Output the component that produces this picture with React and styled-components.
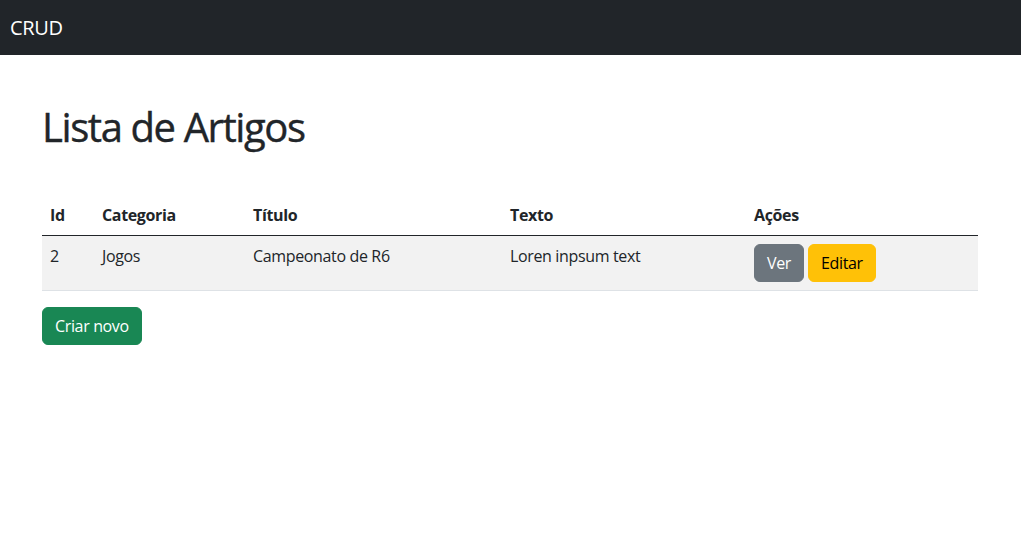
import React from "react"
import styled, { createGlobalStyle } from "styled-components"

const GlobalStyle = createGlobalStyle`
    *, *::before, *::after {
        box-sizing: border-box;
    }
    body {
        margin: 0;
        font-family: "Open Sans", "Noto Sans", sans-serif;
        font-size: 16px;
        line-height: 1.5;
        letter-spacing: -0.022em;
        color: #212529;
        background: #fff;
    }
`

const Navbar = styled.nav`
    height: 55px;
    background: #212529;
    display: flex;
    align-items: center;
    padding-left: 10px;
`

const Brand = styled.span`
    color: #fff;
    font-size: 20px;
    line-height: 30px;
`

const Container = styled.main`
    width: 936px;
    margin: 0 0 0 42px;
    padding-top: 48px;
`

const Title = styled.h1`
    margin: 0 0 44px;
    font-size: 40px;
    font-weight: 500;
    line-height: 1.2;
    letter-spacing: -0.035em;
    -webkit-text-stroke: 0.4px #212529;
`

const Table = styled.table`
    width: 100%;
    border-collapse: collapse;
    table-layout: fixed;
    margin-bottom: 16px;
`

const HeadCell = styled.th`
    text-align: left;
    font-weight: 700;
    padding: 8px;
    width: ${p => p.$w}px;
    border-bottom: 1px solid #212529;
`

const Row = styled.tr`
    background: #f2f2f2;
    border-bottom: 1px solid #dee2e6;
`

const Cell = styled.td`
    padding: 8px;
    vertical-align: top;
`

const Actions = styled.div`
    display: flex;
    gap: 4px;
`

const colors = {
    secondary: ["#6c757d", "#fff"],
    warning: ["#ffc107", "#000"],
    success: ["#198754", "#fff"],
}

const Button = styled.button`
    font: inherit;
    letter-spacing: inherit;
    line-height: 24px;
    padding: 6px 12px;
    border: 1px solid ${p => colors[p.$variant][0]};
    border-radius: 6px;
    background: ${p => colors[p.$variant][0]};
    color: ${p => colors[p.$variant][1]};
    cursor: pointer;
`

const artigos = [
    { id: 2, categoria: "Jogos", titulo: "Campeonato de R6", texto: "Loren inpsum text" },
]

const App = () => (
    <>
        <GlobalStyle />
        <Navbar>
            <Brand>CRUD</Brand>
        </Navbar>
        <Container>
            <Title>Lista de Artigos</Title>
            <Table>
                <thead>
                    <tr>
                        <HeadCell $w={52}>Id</HeadCell>
                        <HeadCell $w={151}>Categoria</HeadCell>
                        <HeadCell $w={257}>Título</HeadCell>
                        <HeadCell $w={244}>Texto</HeadCell>
                        <HeadCell $w={232}>Ações</HeadCell>
                    </tr>
                </thead>
                <tbody>
                    {artigos.map(a => (
                        <Row key={a.id}>
                            <Cell>{a.id}</Cell>
                            <Cell>{a.categoria}</Cell>
                            <Cell>{a.titulo}</Cell>
                            <Cell>{a.texto}</Cell>
                            <Cell>
                                <Actions>
                                    <Button $variant="secondary">Ver</Button>
                                    <Button $variant="warning">Editar</Button>
                                </Actions>
                            </Cell>
                        </Row>
                    ))}
                </tbody>
            </Table>
            <Button $variant="success">Criar novo</Button>
        </Container>
    </>
)

export default App
